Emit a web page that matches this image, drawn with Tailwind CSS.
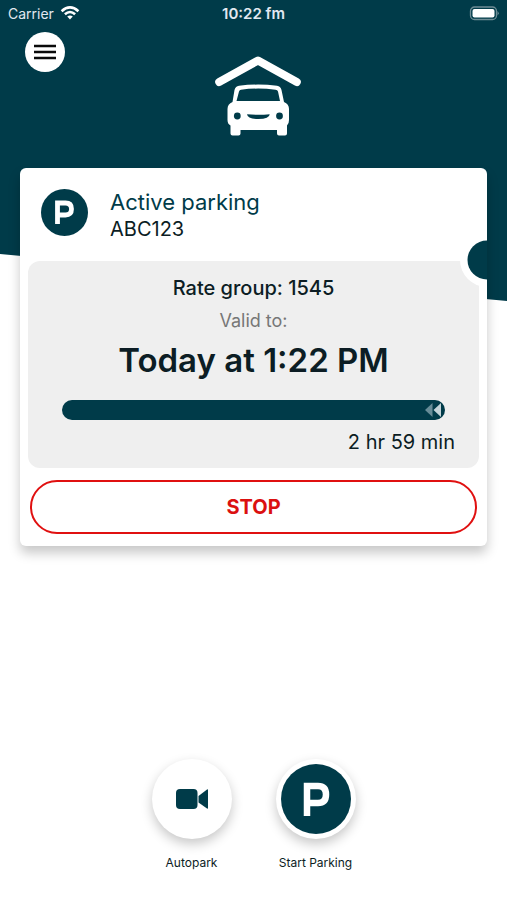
<!DOCTYPE html>
<html lang="en">
<head>
<meta charset="utf-8">
<meta name="viewport" content="width=device-width, initial-scale=1">
<title>Active parking</title>
<script src="https://cdn.jsdelivr.net/npm/@tailwindcss/browser@4"></script>
</head>
<body class="relative flex min-h-screen flex-col bg-white font-['Inter',sans-serif] text-[#0c1d24]">
  <!-- Slanted backdrop -->
  <svg class="absolute inset-x-0 top-0 -z-10 h-[301px] w-full" viewBox="0 0 507 301" preserveAspectRatio="none" aria-hidden="true">
    <path d="M0 0H507V301L0 254Z" fill="#003b49"/>
  </svg>

  <div class="grid h-7 grid-cols-3 items-center px-2 text-sm text-slate-200">
    <div class="flex items-center gap-1.5">
      <span>Carrier</span>
      <svg class="h-4 w-5" viewBox="0 0 20 16" fill="none" stroke="#fff" stroke-width="2.6" aria-label="Wi-Fi">
        <path d="M1.6 5.2Q10-2.4 18.4 5.2M4.9 8.3Q10 3.7 15.1 8.3"/>
        <path d="M7.2 10.6Q10 8.4 12.8 10.6L10 13.5Z" fill="#fff" stroke="none"/>
      </svg>
    </div>
    <span class="text-center text-[15px] font-semibold">10:22 fm</span>
    <svg class="h-4 w-8 justify-self-end" viewBox="0 0 32 16" aria-label="Battery full">
      <rect x="3.5" y="1" width="26" height="12.5" rx="4" fill="none" stroke="#6d8c95" stroke-width="1.3"/>
      <rect x="5.5" y="3" width="22" height="8.5" rx="2" fill="#fff"/>
      <path d="M30.5 5Q33 7.3 30.5 9.5Z" fill="#6d8c95"/>
    </svg>
  </div>

  <header class="grid grid-cols-[1fr_auto_1fr] items-start pt-1 pr-[17px] pl-[25px]">
    <button type="button" aria-label="Open menu" class="flex size-10 items-center justify-center rounded-full bg-white">
      <svg class="h-4 w-6" viewBox="0 0 24 16" stroke="#0a0a0a" stroke-width="2.4" aria-hidden="true"><path d="M1 2H23M1 8H23M1 14H23"/></svg>
    </button>
    <svg class="mt-[23px] h-[82px] w-[88px]" viewBox="0 0 88 82" aria-label="Garage logo">
      <path d="M5.2 27L44 5.5L82.8 27" fill="none" stroke="#fff" stroke-width="8" stroke-linecap="round" stroke-linejoin="round"/>
      <path fill="#fff" fill-rule="evenodd" d="M20.5 35Q21.5 31.2 25 30.7Q44 28.5 63 30.7Q66.5 31.2 67.5 35L70 47Q75 49 75 54V65Q75 69 73 70.5V78.5Q73 80.5 71 80.5H65Q63 80.5 63 78.5V75H26.5V78.5Q26.5 80.5 24.500 80.5H18.5Q16.5 80.5 16.5 78.5V70.5Q13.5 69 13.5 65V54Q13.5 49 18.5 47ZM25 36.5L22.5 46H66L64 36.5Q63.5 35 61.5 34.7Q44 32.5 27 34.7Q25.5 35 25 36.5Z"/>
      <g fill="#003b49"><circle cx="23.3" cy="61" r="3.4"/><circle cx="65.5" cy="61" r="3.4"/><path d="M33 59.3Q44.3 60.3 55.7 59.3Q55.500 64 44.3 64Q33.500 64 33 59.3Z"/></g>
    </svg>
  </header>

  <main class="relative mx-5 mt-[31px] rounded-md bg-white px-2 pb-3 shadow-[0_7px_12px_rgba(0,0,0,0.22)]">
    <div class="flex h-[93px] items-center gap-[22px] px-[13px]">
      <svg class="-mt-1 size-[47px]" viewBox="0 0 47 47" aria-label="Parking">
        <circle cx="23.5" cy="23.5" r="23.5" fill="#003b49"/>
        <path d="M16.5 35V14H24.5Q30.5 14 30.5 20T24.5 26H16.5" fill="none" stroke="#fff" stroke-width="4.8"/>
      </svg>
      <div>
        <h1 class="text-[22px] leading-7 text-[#003b49]">Active parking</h1>
        <p class="text-xl leading-[26px]">ABC123</p>
      </div>
    </div>

    <section class="flex flex-col rounded-xl bg-[#efefef] pt-3 pb-3 text-center">
      <p class="text-xl leading-[30px] font-medium">Rate group: 1545</p>
      <p class="text-lg leading-9 text-[#777]">Valid to:</p>
      <h2 class="text-[33px] leading-[42px] font-semibold">Today at 1:22 PM</h2>
      <div role="progressbar" aria-label="Time remaining" aria-valuenow="100" class="mx-[34px] mt-[19px] flex h-5 items-center justify-end rounded-full bg-[#003b49] pr-1">
        <svg class="h-3.5 w-4" viewBox="0 0 16 14" aria-hidden="true"><path d="M7.5 0V14L0 7Z" fill="#668c97"/><path d="M16 0V14L8.5 7Z" fill="#c3d3d8"/></svg>
      </div>
      <p class="mt-2 mr-6 text-right text-xl leading-7">2 hr 59 min</p>
    </section>

    <button type="button" class="mx-[2px] mt-3 flex h-[54px] w-[calc(100%-4px)] items-center justify-center rounded-full border-2 border-[#e01010] text-xl font-bold text-[#db1010]">STOP</button>

    <!-- Ticket notch on the card edge -->
    <svg class="absolute top-[65px] right-0 h-[54px] w-[27px]" viewBox="0 0 27 54" aria-hidden="true">
      <circle cx="27" cy="27" r="27" fill="#fff"/><circle cx="27" cy="27" r="19.5" fill="#003b49"/>
    </svg>
  </main>

  <nav class="mt-auto flex justify-center gap-[34px] pb-[29px] text-xs">
    <button type="button" class="flex w-[90px] flex-col items-center gap-4">
      <span class="flex size-20 items-center justify-center rounded-full bg-white shadow-[0_5px_12px_rgba(0,0,0,0.22)]">
        <svg class="h-6 w-9" viewBox="0 0 36 24" fill="#003b49" aria-hidden="true"><rect x="2" y="2" width="21.5" height="20" rx="4"/><path d="M24.5 9L33 2.5Q34 2 34 3V21Q34 22 33 21.5L24.5 15.5Z"/></svg>
      </span>
      <span>Autopark</span>
    </button>
    <button type="button" class="flex w-[90px] flex-col items-center gap-4">
      <span class="flex size-20 items-center justify-center rounded-full bg-white shadow-[0_5px_12px_rgba(0,0,0,0.22)]">
        <svg class="size-[70px]" viewBox="0 0 70 70" aria-hidden="true"><circle cx="35" cy="35" r="35" fill="#003b49"/><path d="M26 52V22H37Q45 22 45 30.5T37 39H26" fill="none" stroke="#fff" stroke-width="6.5"/></svg>
      </span>
      <span class="whitespace-nowrap">Start Parking</span>
    </button>
  </nav>
</body>
</html>
